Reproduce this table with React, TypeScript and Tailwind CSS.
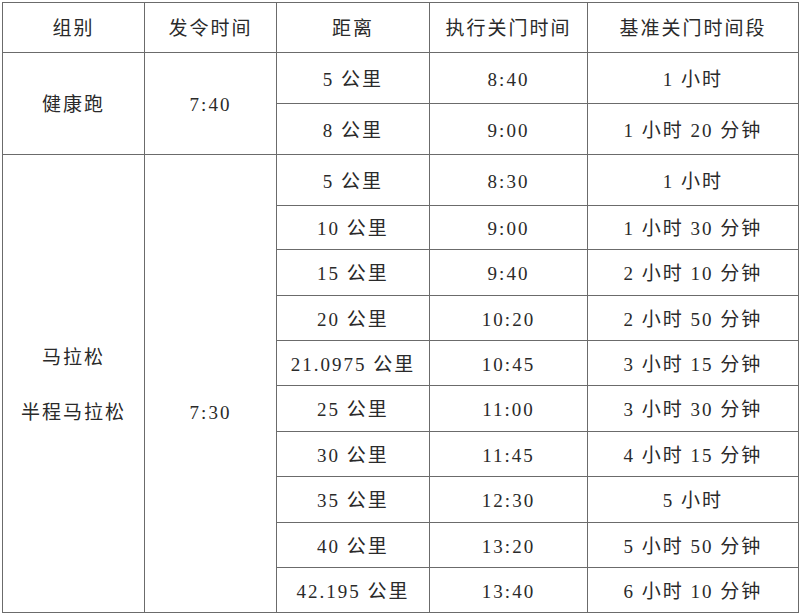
import React from "react";

const rows1 = [
  ["5 公里", "8:40", "1 小时"],
  ["8 公里", "9:00", "1 小时 20 分钟"],
];
const rows2 = [
  ["5 公里", "8:30", "1 小时", "h-[51px]"],
  ["10 公里", "9:00", "1 小时 30 分钟", "h-[44px]"],
  ["15 公里", "9:40", "2 小时 10 分钟", "h-[46px]"],
  ["20 公里", "10:20", "2 小时 50 分钟", "h-[45px]"],
  ["21.0975 公里", "10:45", "3 小时 15 分钟", "h-[45px]"],
  ["25 公里", "11:00", "3 小时 30 分钟", "h-[46px]"],
  ["30 公里", "11:45", "4 小时 15 分钟", "h-[45px]"],
  ["35 公里", "12:30", "5 小时", "h-[46px]"],
  ["40 公里", "13:20", "5 小时 50 分钟", "h-[45px]"],
  ["42.195 公里", "13:40", "6 小时 10 分钟", "h-[45px]"],
];

const td = "border border-[#6b6b6b] text-center align-middle p-0 pt-[4px]";

export default function App() {
  return (
    <div
      className="w-[800px] h-[615px] bg-white pt-[2px] pl-[2px] text-[19px] tracking-[2px] text-[#2a2a2a]"
      style={{ fontFamily: '"Liberation Serif", "Noto Sans CJK SC", serif' }}
    >
      <table className="border-collapse table-fixed w-[796px]">
        <colgroup>
          <col className="w-[142px]" />
          <col className="w-[132px]" />
          <col className="w-[153px]" />
          <col className="w-[158px]" />
          <col className="w-[211px]" />
        </colgroup>
        <tbody>
          <tr className="h-[50px]">
            <td className={td}>组别</td>
            <td className={td}>发令时间</td>
            <td className={td}>距离</td>
            <td className={td}>执行关门时间</td>
            <td className={td}>基准关门时间段</td>
          </tr>
          {rows1.map((r, i) => (
            <tr key={i} className="h-[51px]">
              {i === 0 && (
                <>
                  <td className={td} rowSpan={2}>健康跑</td>
                  <td className={td} rowSpan={2}>7:40</td>
                </>
              )}
              <td className={td}>{r[0]}</td>
              <td className={td}>{r[1]}</td>
              <td className={td}>{r[2]}</td>
            </tr>
          ))}
          {rows2.map((r, i) => (
            <tr key={i} className={r[3]}>
              {i === 0 && (
                <>
                  <td className={td} rowSpan={10}>
                    <div className="flex flex-col items-center gap-[26px]">
                      <span>马拉松</span>
                      <span>半程马拉松</span>
                    </div>
                  </td>
                  <td className={td} rowSpan={10}>
                    <div className="flex flex-col items-center gap-[26px]">
                      <span className="invisible">马拉松</span>
                      <span>7:30</span>
                    </div>
                  </td>
                </>
              )}
              <td className={td}>{r[0]}</td>
              <td className={td}>{r[1]}</td>
              <td className={td}>{r[2]}</td>
            </tr>
          ))}
        </tbody>
      </table>
    </div>
  );
}
